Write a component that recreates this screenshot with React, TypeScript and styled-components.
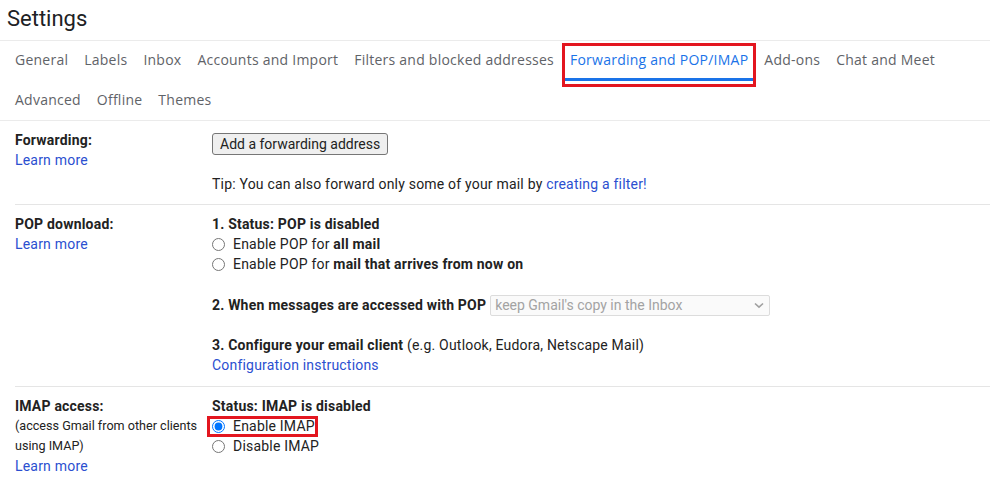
import React from "react";
import styled, { createGlobalStyle } from "styled-components";

const GlobalStyle = createGlobalStyle`
  body {
    margin: 0;
    background: #fff;
    font-family: Roboto, "Liberation Sans", Arial, sans-serif;
    color: #222;
  }
`;

const Page = styled.div`
  width: 990px;
  height: 477px;
  overflow: hidden;
  background: #fff;
`;

const Title = styled.div`
  height: 40px;
  line-height: 38px;
  padding-left: 7px;
  font-size: 22px;
  color: #202124;
  border-bottom: 1px solid #ebebeb;
`;

const TabBar = styled.div`
  border-bottom: 1px solid #ebebeb;
  padding-left: 7px;
`;

const TabRow = styled.div<{ $h: number }>`
  display: flex;
  height: ${(p) => p.$h}px;
`;

const Tab = styled.div<{ $active?: boolean }>`
  position: relative;
  display: flex;
  align-items: center;
  padding: 0 8px 3px;
  font-family: "Open Sans", Roboto, sans-serif;
  font-size: 14px;
  letter-spacing: 0.24px;
  color: ${(p) => (p.$active ? "#1a73e8" : "#5f6368")};
  white-space: nowrap;
`;

const Underline = styled.span`
  position: absolute;
  left: 3px;
  right: 3px;
  bottom: 0;
  height: 3px;
  background: #1a73e8;
`;

const RedBox = styled.span<{ $l: number; $t: number; $r: number; $b: number }>`
  position: absolute;
  left: ${(p) => p.$l}px;
  top: ${(p) => p.$t}px;
  right: ${(p) => p.$r}px;
  bottom: ${(p) => p.$b}px;
  border: 3px solid #e3161f;
  pointer-events: none;
`;

const Section = styled.div<{ $pb: number; $last?: boolean }>`
  margin-left: 15px;
  display: grid;
  grid-template-columns: 197px 1fr;
  padding: 9px 0 ${(p) => p.$pb}px;
  border-bottom: ${(p) => (p.$last ? "none" : "1px solid #e5e5e5")};
  font-size: 14px;
  line-height: 20px;
  letter-spacing: 0.2px;
`;

const Column = styled.div`
  display: flex;
  flex-direction: column;
  align-items: flex-start;
`;

const Label = styled.div`
  font-weight: 700;
  color: #222;
`;

const Note = styled.div`
  font-size: 12.6px;
  letter-spacing: 0;
  color: #222;
`;

const Link = styled.a`
  color: #2b4fd0;
  text-decoration: none;
  cursor: pointer;
`;

const Button = styled.button`
  margin-top: 3px;
  height: 22px;
  padding: 0 7px;
  font-family: Roboto, "Liberation Sans", sans-serif;
  font-size: 14px;
  letter-spacing: 0;
  color: #222;
  background: #efefef;
  border: 1px solid #767676;
  border-radius: 3px;
`;

const Line = styled.div<{ $gap?: number }>`
  margin-top: ${(p) => p.$gap ?? 0}px;
  white-space: nowrap;
`;

const Strong = styled.b`
  font-weight: 700;
`;

const RadioRow = styled.label`
  position: relative;
  display: flex;
  align-items: center;
  height: 20px;
  white-space: nowrap;
`;

const Radio = styled.input.attrs({ type: "radio" })`
  width: 13px;
  height: 13px;
  margin: 0 8px 0 0;
`;

const SelectRow = styled.div`
  display: flex;
  align-items: center;
  height: 22px;
  margin-top: 20px;
  white-space: nowrap;
`;

const FakeSelect = styled.div`
  margin-left: 4px;
  width: 280px;
  height: 21px;
  box-sizing: border-box;
  border: 1px solid #dcdcdc;
  border-radius: 2px;
  background: #fafafa;
  display: flex;
  align-items: center;
  justify-content: space-between;
  padding: 0 5px 0 4px;
  font-size: 14px;
  letter-spacing: 0;
  color: #a3a3a3;
`;

const Chevron = () => (
  <svg width="10" height="7" viewBox="0 0 10 7" fill="none">
    <path d="M1 1.5 5 5.2 9 1.5" stroke="#a0a0a0" strokeWidth="1.6" />
  </svg>
);

const tabsTop = [
  "General",
  "Labels",
  "Inbox",
  "Accounts and Import",
  "Filters and blocked addresses",
  "Forwarding and POP/IMAP",
  "Add-ons",
  "Chat and Meet",
];
const tabsBottom = ["Advanced", "Offline", "Themes"];

export default function App() {
  return (
    <Page>
      <GlobalStyle />
      <Title>Settings</Title>
      <TabBar>
        <TabRow $h={40}>
          {tabsTop.map((t) => {
            const active = t === "Forwarding and POP/IMAP";
            return (
              <Tab key={t} $active={active}>
                {t}
                {active && (
                  <>
                    <Underline />
                    <RedBox $l={0} $t={2} $r={0} $b={-6} />
                  </>
                )}
              </Tab>
            );
          })}
        </TabRow>
        <TabRow $h={39}>
          {tabsBottom.map((t) => (
            <Tab key={t}>{t}</Tab>
          ))}
        </TabRow>
      </TabBar>

      <Section $pb={10}>
        <Column>
          <Label>Forwarding:</Label>
          <Link>Learn more</Link>
        </Column>
        <Column>
          <Button>Add a forwarding address</Button>
          <Line $gap={19}>
            Tip: You can also forward only some of your mail by{" "}
            <Link>creating a filter!</Link>
          </Line>
        </Column>
      </Section>

      <Section $pb={11}>
        <Column>
          <Label>POP download:</Label>
          <Link>Learn more</Link>
        </Column>
        <Column>
          <Line>
            <Strong>1. Status: POP is disabled</Strong>
          </Line>
          <RadioRow>
            <Radio name="pop" />
            Enable POP for&nbsp;<Strong>all mail</Strong>
          </RadioRow>
          <RadioRow>
            <Radio name="pop" />
            Enable POP for&nbsp;<Strong>mail that arrives from now on</Strong>
          </RadioRow>
          <SelectRow>
            <Strong>2. When messages are accessed with POP</Strong>
            <FakeSelect>
              keep Gmail's copy in the Inbox
              <Chevron />
            </FakeSelect>
          </SelectRow>
          <Line $gap={19}>
            <Strong>3. Configure your email client</Strong> (e.g. Outlook,
            Eudora, Netscape Mail)
          </Line>
          <Link>Configuration instructions</Link>
        </Column>
      </Section>

      <Section $pb={0} $last>
        <Column>
          <Label>IMAP access:</Label>
          <Note>(access Gmail from other clients</Note>
          <Note>using IMAP)</Note>
          <Link>Learn more</Link>
        </Column>
        <Column>
          <Line>
            <Strong>Status: IMAP is disabled</Strong>
          </Line>
          <RadioRow>
            <Radio name="imap" defaultChecked />
            Enable IMAP
            <RedBox $l={-5} $t={0} $r={-3} $b={-1} />
          </RadioRow>
          <RadioRow>
            <Radio name="imap" />
            Disable IMAP
          </RadioRow>
        </Column>
      </Section>
    </Page>
  );
}
